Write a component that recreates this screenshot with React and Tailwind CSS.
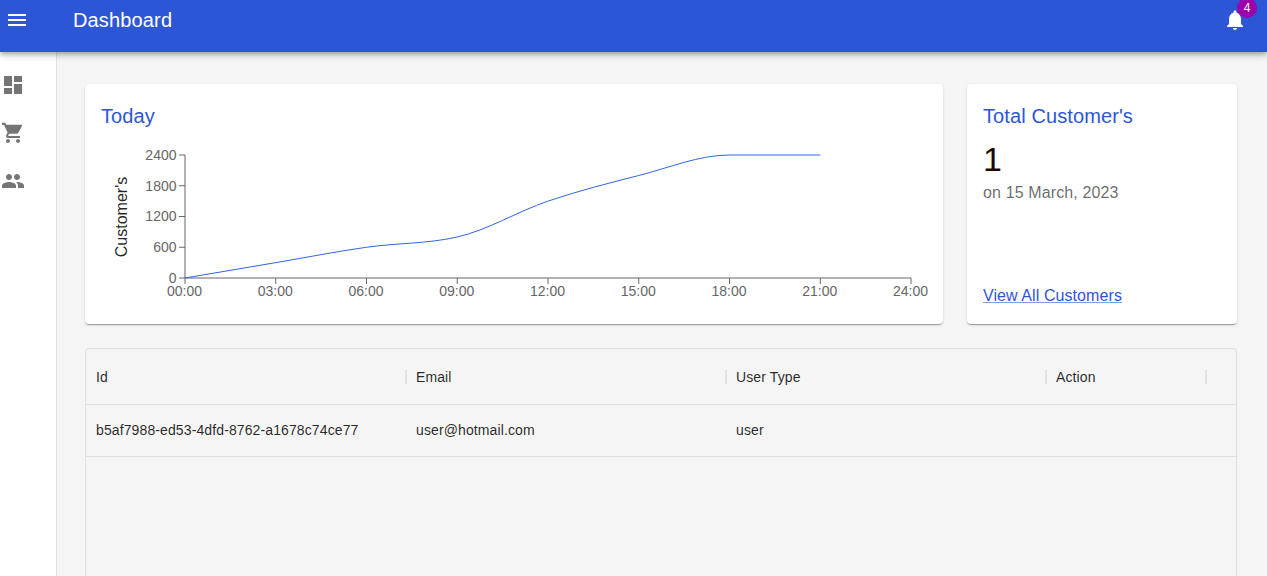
const ICONS = {
  menu: "M3 18h18v-2H3v2zm0-5h18v-2H3v2zm0-7v2h18V6H3z",
  dashboard: "M3 13h8V3H3v10zm0 8h8v-6H3v6zm10 0h8V11h-8v10zm0-18v6h8V3h-8z",
  cart: "M7 18c-1.1 0-1.99.9-1.99 2S5.9 22 7 22s2-.9 2-2-.9-2-2-2zM1 2v2h2l3.6 7.59-1.35 2.45c-.16.28-.25.61-.25.96 0 1.1.9 2 2 2h12v-2H7.42c-.14 0-.25-.11-.25-.25l.03-.12.9-1.83h7.45c.75 0 1.41-.41 1.75-1.03l3.58-6.49c.08-.14.12-.31.12-.48 0-.55-.45-1-1-1H5.21l-.94-2H1zm16 16c-1.1 0-1.99.9-1.99 2s.89 2 1.99 2 2-.9 2-2-.9-2-2-2z",
  people: "M16 11c1.66 0 2.99-1.34 2.99-3S17.66 5 16 5c-1.66 0-3 1.34-3 3s1.34 3 3 3zm-8 0c1.66 0 2.99-1.34 2.99-3S9.66 5 8 5C6.34 5 5 6.34 5 8s1.34 3 3 3zm0 2c-2.33 0-7 1.17-7 3.5V19h14v-2.5c0-2.33-4.67-3.5-7-3.5zm8 0c-.29 0-.62.02-.97.05 1.16.84 1.97 1.97 1.97 3.45V19h6v-2.5c0-2.33-4.67-3.5-7-3.5z",
  bell: "M12 22c1.1 0 2-.9 2-2h-4c0 1.1.89 2 2 2zm6-6v-5c0-3.07-1.64-5.64-4.5-6.32V4c0-.83-.67-1.5-1.5-1.5s-1.5.67-1.5 1.5v.68C7.63 5.36 6 7.92 6 11v5l-2 2v1h16v-1l-2-2z",
};

function Icon({ d, className }) {
  return (
    <svg viewBox="0 0 24 24" fill="currentColor" className={className}>
      <path d={d} />
    </svg>
  );
}

const data = [0, 300, 600, 800, 1500, 2000, 2400, 2400];
const X0 = 84;
const STEP = 90.75;
const Y_BOTTOM = 146;
const Y_TOP = 23;
const px = (i) => X0 + i * STEP;
const py = (v) => Y_BOTTOM - (v / 2400) * (Y_BOTTOM - Y_TOP);

function monotonePath() {
  const pts = data.map((v, i) => [px(i), py(v)]);
  const n = pts.length;
  const s = [];
  for (let i = 0; i < n - 1; i++) s.push((pts[i + 1][1] - pts[i][1]) / (pts[i + 1][0] - pts[i][0]));
  const t = new Array(n);
  for (let i = 1; i < n - 1; i++) {
    const h = STEP;
    const p = (s[i - 1] * h + s[i] * h) / (2 * h);
    const sign = (a) => (a < 0 ? -1 : 1);
    t[i] = (sign(s[i - 1]) + sign(s[i])) * Math.min(Math.abs(s[i - 1]), Math.abs(s[i]), 0.5 * Math.abs(p)) || 0;
  }
  t[0] = (3 * s[0] - t[1]) / 2;
  t[n - 1] = (3 * s[n - 2] - t[n - 2]) / 2;
  let d = `M${pts[0][0]},${pts[0][1]}`;
  for (let i = 0; i < n - 1; i++) {
    const dx = STEP / 3;
    d += `C${pts[i][0] + dx},${pts[i][1] + dx * t[i]},${pts[i + 1][0] - dx},${pts[i + 1][1] - dx * t[i + 1]},${pts[i + 1][0]},${pts[i + 1][1]}`;
  }
  return d;
}

function Chart() {
  const xLabels = ["00:00", "03:00", "06:00", "09:00", "12:00", "15:00", "18:00", "21:00", "24:00"];
  const yLabels = [0, 600, 1200, 1800, 2400];
  return (
    <svg width="826" height="176" className="block overflow-visible">
      <line x1={X0} y1={Y_BOTTOM} x2={px(8)} y2={Y_BOTTOM} stroke="#666" />
      <line x1={X0} y1={Y_TOP} x2={X0} y2={Y_BOTTOM} stroke="#666" />
      {xLabels.map((l, i) => (
        <g key={l}>
          <line x1={px(i)} y1={Y_BOTTOM} x2={px(i)} y2={Y_BOTTOM + 6} stroke="#666" />
          <text x={px(i) - 0.5} y={164} textAnchor="middle" fontSize="14" fill="#666">{l}</text>
        </g>
      ))}
      {yLabels.map((v) => (
        <g key={v}>
          <line x1={X0 - 6} y1={py(v)} x2={X0} y2={py(v)} stroke="#666" />
          <text x={X0 - 8.5} y={Math.round(py(v) - 0.01) + 5} textAnchor="end" fontSize="14" fill="#666">{v}</text>
        </g>
      ))}
      <text transform="rotate(-90 25.5 85)" x={25.5} y={85} textAnchor="middle" fontSize="16" fill="rgba(0,0,0,0.87)">Customer's</text>
      <path d={monotonePath()} fill="none" stroke="#2f66e0" strokeWidth="1" />
    </svg>
  );
}

function Sep() {
  return <span className="w-0.5 h-3.5 bg-[#e0e0e0] -mr-px shrink-0" />;
}

function HeadCell({ label, className }) {
  return (
    <div className={"flex items-center justify-between pl-2.5 " + className}>
      <span className="pt-0.5">{label}</span>
      <Sep />
    </div>
  );
}

export default function App() {
  return (
    <div className="relative h-[576px] overflow-hidden flex flex-col bg-[#f5f5f5] font-['Liberation_Sans',Arial,sans-serif]">
      <header className="relative z-10 h-[52px] shrink-0 bg-[#2d56d6] text-white shadow-[0px_2px_4px_-1px_rgba(0,0,0,0.2),0px_4px_5px_0px_rgba(0,0,0,0.14),0px_1px_10px_0px_rgba(0,0,0,0.12)] flex items-start">
        <div className="h-10 flex items-center pl-[5px] pr-[20px] flex-1">
          <Icon d={ICONS.menu} className="w-6 h-6" />
          <span className="ml-11 text-[20px] leading-8 tracking-[0.0075em]">Dashboard</span>
        </div>
        <div className="relative h-10 flex items-center mr-5">
          <Icon d={ICONS.bell} className="w-6 h-6" />
          <span className="absolute left-[14px] -top-0.5 w-5 h-5 rounded-full bg-[#9c00a8] text-[12px] flex items-center justify-center">4</span>
        </div>
      </header>
      <div className="flex flex-1 min-h-0">
        <aside className="w-[57px] shrink-0 bg-white border-r border-[#e0e0e0] pt-[21px] pl-px flex flex-col gap-6 text-[#757575]">
          <Icon d={ICONS.dashboard} className="w-6 h-6" />
          <Icon d={ICONS.cart} className="w-6 h-6" />
          <Icon d={ICONS.people} className="w-6 h-6" />
        </aside>
        <main className="flex-1 min-w-0 pt-8 pl-7 pr-[30px]">
          <div className="flex gap-6 h-60">
            <section className="flex-1 bg-white rounded p-4 shadow-[0px_2px_1px_-1px_rgba(0,0,0,0.2),0px_1px_1px_0px_rgba(0,0,0,0.14),0px_1px_3px_0px_rgba(0,0,0,0.12)]">
              <h2 className="text-[20px] leading-8 text-[#2d56d6] tracking-[0.005em]">Today</h2>
              <Chart />
            </section>
            <section className="w-[270px] bg-white rounded p-4 flex flex-col shadow-[0px_2px_1px_-1px_rgba(0,0,0,0.2),0px_1px_1px_0px_rgba(0,0,0,0.14),0px_1px_3px_0px_rgba(0,0,0,0.12)]">
              <h2 className="text-[20px] leading-8 text-[#2d56d6] tracking-[0.005em]">Total Customer's</h2>
              <div className="text-[34px] leading-[54px] text-[#1c0a00] -mb-[5px]">1</div>
              <p className="text-[16px] leading-6 tracking-[0.008em] text-black/60">on 15 March, 2023</p>
              <a href="#" className="mt-auto text-[16px] leading-6 tracking-[0.005em] text-[#2d56d6] underline decoration-[#2d56d6]/60">View All Customers</a>
            </section>
          </div>
          <div className="mt-6 h-[400px] rounded border border-[#e0e0e0] text-[14px] tracking-[0.008em] text-black/85">
            <div className="flex h-14 border-b border-[#e0e0e0]">
              <HeadCell label="Id" className="w-80" />
              <HeadCell label="Email" className="w-80" />
              <HeadCell label="User Type" className="w-80" />
              <HeadCell label="Action" className="w-40" />
            </div>
            <div className="flex h-[52px] items-center border-b border-[#e0e0e0]">
              <div className="w-80 pl-2.5">b5af7988-ed53-4dfd-8762-a1678c74ce77</div>
              <div className="w-80 pl-2.5">user@hotmail.com</div>
              <div className="w-80 pl-2.5">user</div>
              <div className="w-40" />
            </div>
          </div>
        </main>
      </div>
    </div>
  );
}
